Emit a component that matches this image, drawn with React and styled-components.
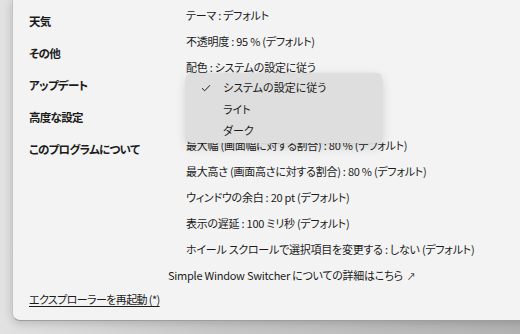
import React from "react";
import styled, { createGlobalStyle } from "styled-components";

const GlobalStyle = createGlobalStyle`
  html, body {
    margin: 0;
    padding: 0;
    width: 520px;
    height: 334px;
    overflow: hidden;
    background: linear-gradient(to right, #e2e2e2 0%, #c8c8c8 40%, #b2b2b2 100%);
    font-family: "Noto Sans CJK JP", "Noto Sans", sans-serif;
    font-feature-settings: "palt";
    color: #1b1b1b;
  }
`;

const Window = styled.div`
  margin-left: 12px;
  width: 520px;
  height: 321px;
  box-sizing: border-box;
  background: #f3f3f3;
  border-left: 1px solid #c4c4c4;
  border-bottom: 1px solid #9e9e9e;
  border-bottom-left-radius: 8px;
  box-shadow: 0 2px 10px rgba(0, 0, 0, 0.18);
  display: flex;
  flex-direction: column;
`;

const Main = styled.div`
  display: flex;
  flex: 1;
`;

const Sidebar = styled.nav`
  width: 155px;
  padding: 5px 0 0 16px;
  box-sizing: border-box;
  display: flex;
  flex-direction: column;
`;

const NavItem = styled.div`
  height: 32px;
  line-height: 32px;
  font-size: 11.5px;
  font-weight: 700;
  letter-spacing: -0.7px;
  white-space: nowrap;
`;

const Content = styled.div`
  flex: 1;
  padding-top: 2px;
  display: flex;
  flex-direction: column;
`;

const Row = styled.div`
  position: relative;
  height: 26px;
  line-height: 26px;
  font-size: 11px;
  letter-spacing: -0.25px;
  padding-left: ${(p) => (p.$flush ? "0" : "18px")};
  white-space: nowrap;
`;

// rows that sit fully under the open menu
const Covered = styled.span`
  visibility: hidden;
`;

const Arrow = styled.span`
  font-size: 9px;
  margin-left: 4px;
`;

const Menu = styled.div`
  position: absolute;
  left: 18px;
  top: 19px;
  width: 196px;
  height: 70px;
  box-sizing: border-box;
  padding-top: 4px;
  background: #dedede;
  border-radius: 6px;
  box-shadow: 0 4px 12px rgba(0, 0, 0, 0.14), 0 0 2px rgba(0, 0, 0, 0.08);
  z-index: 2;
  letter-spacing: 0;
`;

const MenuItem = styled.div`
  height: 21.5px;
  line-height: 21.5px;
  font-size: 11px;
  display: flex;
  align-items: center;
`;

const Check = styled.span`
  width: 37px;
  padding-left: 15px;
  box-sizing: border-box;
  display: flex;
  align-items: center;
`;

const Footer = styled.div`
  height: 36px;
  padding-left: 16px;
  display: flex;
  align-items: flex-start;
`;

const RestartLink = styled.span`
  font-size: 11px;
  letter-spacing: -0.6px;
  text-decoration: underline;
  text-underline-offset: 2px;
  margin-top: 3px;
`;

const navItems = ["天気", "その他", "アップデート", "高度な設定", "このプログラムについて"];

const settings = [
  { text: "テーマ : デフォルト" },
  { text: "不透明度 : 95 % (デフォルト)" },
  { text: "配色 : システムの設定に従う", menu: true },
  { text: "角の設定 : 丸め (デフォルト)", covered: true },
  { text: "行の高さ : 230 px (デフォルト)", covered: true },
  { text: "最大幅 (画面幅に対する割合) : 80 % (デフォルト)" },
  { text: "最大高さ (画面高さに対する割合) : 80 % (デフォルト)" },
  { text: "ウィンドウの余白 : 20 pt (デフォルト)" },
  { text: "表示の遅延 : 100 ミリ秒 (デフォルト)" },
  { text: "ホイール スクロールで選択項目を変更する : しない (デフォルト)" },
];

const options = ["システムの設定に従う", "ライト", "ダーク"];

const CheckIcon = () => (
  <svg width="10" height="8" viewBox="0 0 10 8">
    <path d="M1 4.2 L3.7 6.8 L9 1.2" fill="none" stroke="#1b1b1b" strokeWidth="1" />
  </svg>
);

export default function App() {
  return (
    <>
      <GlobalStyle />
      <Window>
        <Main>
          <Sidebar>
            {navItems.map((n) => (
              <NavItem key={n}>{n}</NavItem>
            ))}
          </Sidebar>
          <Content>
            {settings.map((s) => (
              <Row key={s.text}>
                {s.covered ? <Covered>{s.text}</Covered> : s.text}
                {s.menu && (
                  <Menu>
                    {options.map((o, j) => (
                      <MenuItem key={o}>
                        <Check>{j === 0 && <CheckIcon />}</Check>
                        {o}
                      </MenuItem>
                    ))}
                  </Menu>
                )}
              </Row>
            ))}
            <Row $flush>
              Simple Window Switcher についての詳細はこちら<Arrow>↗</Arrow>
            </Row>
          </Content>
        </Main>
        <Footer>
          <RestartLink>エクスプローラーを再起動 (*)</RestartLink>
        </Footer>
      </Window>
    </>
  );
}
